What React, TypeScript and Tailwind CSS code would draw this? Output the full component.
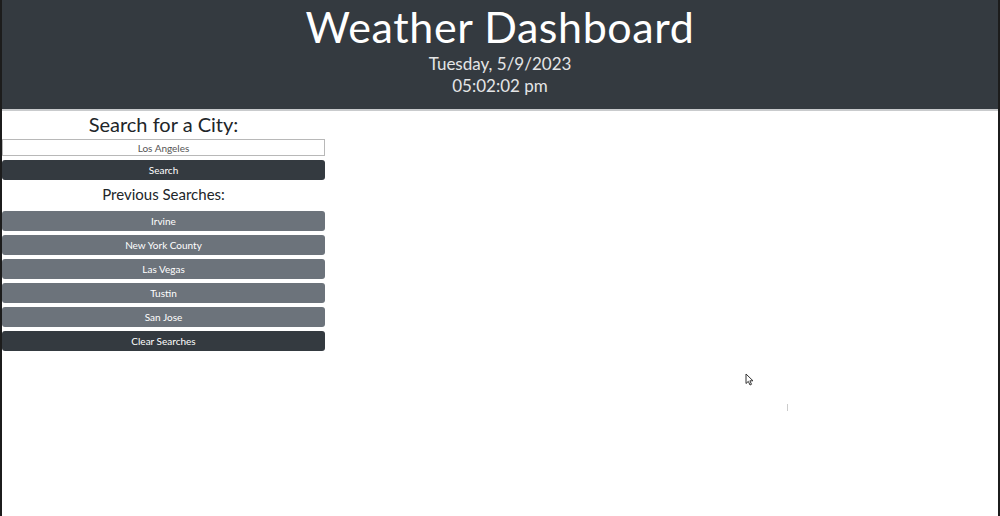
import React from "react";

const history = ["Irvine", "New York County", "Las Vegas", "Tustin", "San Jose"];

export default function App() {
  return (
    <div
      className="relative w-full h-[516px] overflow-hidden bg-white border-x-2 border-[#1c1c1c] flex flex-col"
      style={{ fontFamily: "Lato, 'Open Sans', sans-serif" }}
    >
      <header className="h-[111px] shrink-0 bg-[#343a40] text-white flex flex-col items-center border-b-2 border-[#c9cbcd]">
        <h1 className="text-[43px] leading-[50px] mt-[2px] tracking-[0.6px]">Weather Dashboard</h1>
        <p className="text-[17px] leading-[22px] mt-[1px] text-[#e4e5e6]">Tuesday, 5/9/2023</p>
        <p className="text-[17px] leading-[22px] text-[#e4e5e6]">05:02:02 pm</p>
      </header>

      <main className="flex">
        <aside className="w-[323px] flex flex-col items-stretch">
          <h2 className="text-[20px] leading-[26px] text-center text-[#212529]">Search for a City:</h2>
          <input
            className="h-[17px] mt-[2px] border border-[#b8b8b8] text-center text-[10px] text-[#555] outline-none"
            defaultValue="Los Angeles"
          />
          <button className="h-[20px] mt-[4px] bg-[#343a40] rounded-[3px] text-white text-[10px]">Search</button>
          <h3 className="text-[15px] leading-[20px] text-center text-[#212529] mt-[4px]">Previous Searches:</h3>
          <div className="flex flex-col gap-[4px] mt-[7px]">
            {history.map((city) => (
              <button key={city} className="h-[20px] bg-[#6c737b] rounded-[3px] text-white text-[10px]">
                {city}
              </button>
            ))}
            <button className="h-[20px] bg-[#343a40] rounded-[3px] text-white text-[10px]">Clear Searches</button>
          </div>
        </aside>
      </main>

      <svg className="absolute left-[743px] top-[373px]" width="10" height="13" viewBox="0 0 10 13">
        <path d="M1 1 L1 10.5 L3.3 8.4 L5 12 L6.5 11.3 L4.9 7.8 L8 7.8 Z" fill="white" stroke="#333" strokeWidth="1" />
      </svg>
      <div className="absolute left-[785px] top-[404px] w-px h-[7px] bg-[#ccc]" />
    </div>
  );
}
